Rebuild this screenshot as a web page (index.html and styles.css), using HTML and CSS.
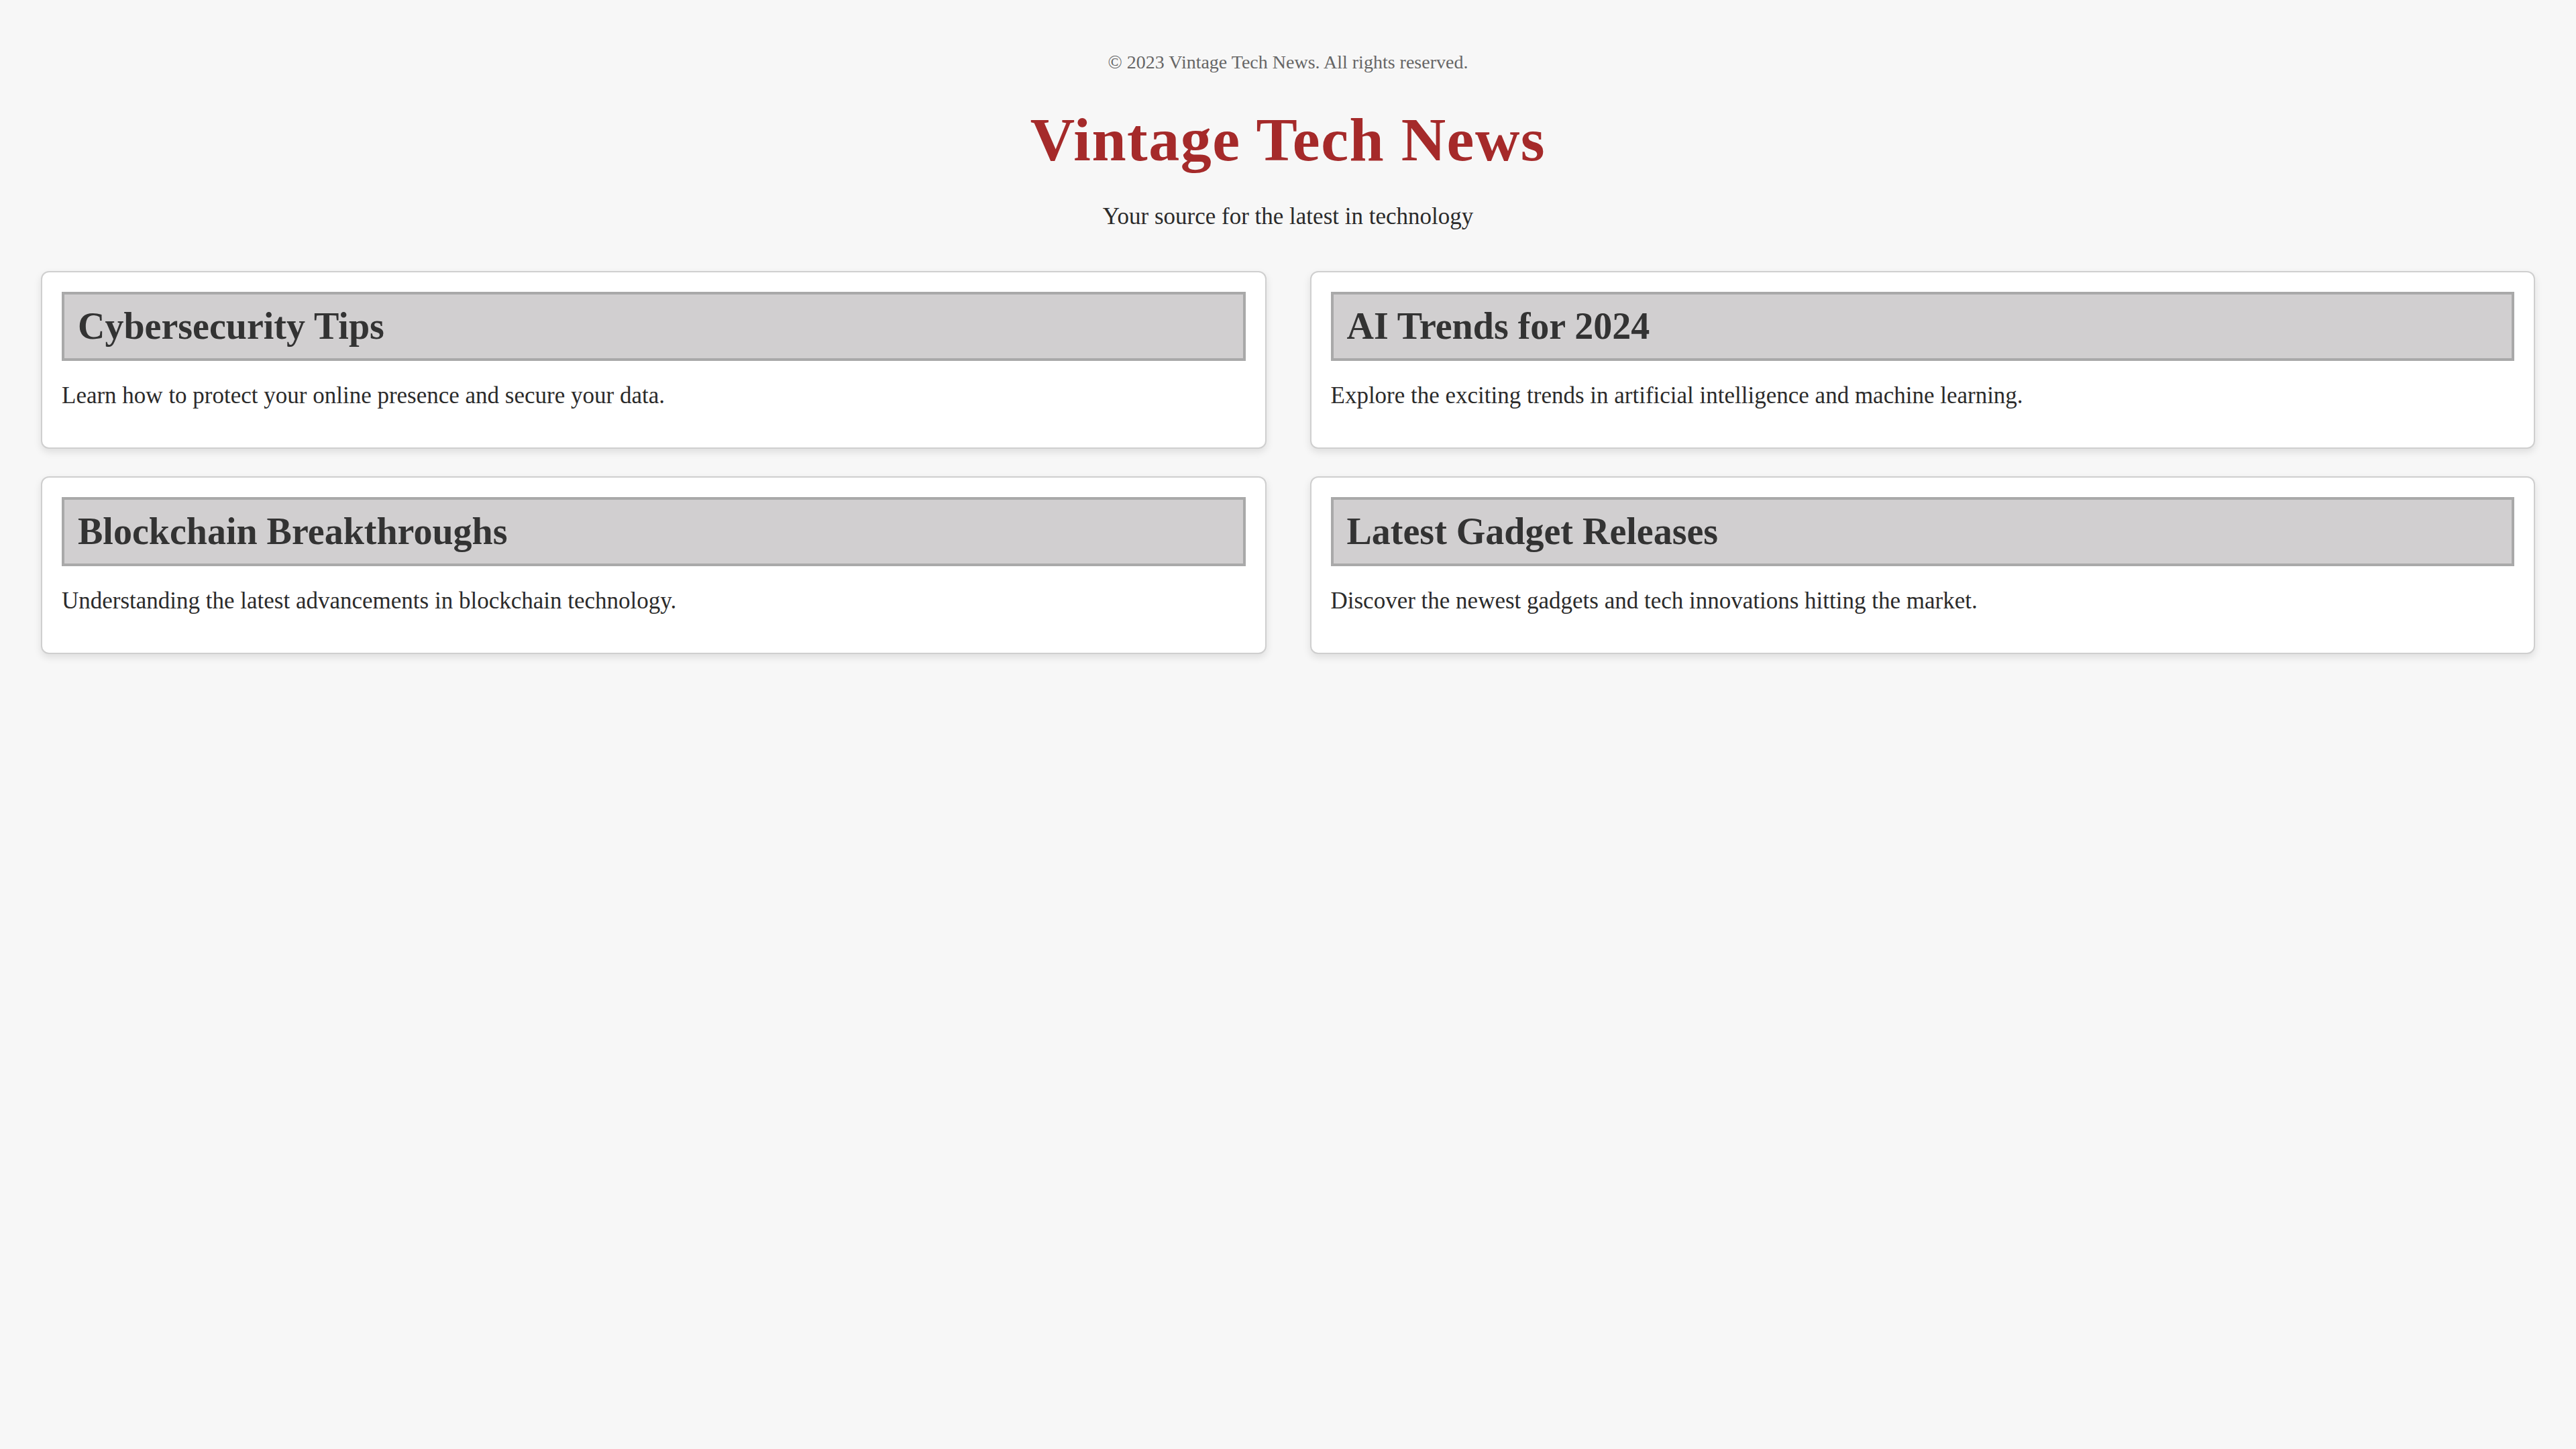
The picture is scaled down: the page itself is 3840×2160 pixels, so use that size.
FILE: index.html
```html
<!DOCTYPE html>
<html lang="en">
<head>
<meta charset="utf-8">
<title>Vintage Tech News</title>
<link rel="stylesheet" href="styles.css">
</head>
<body>
<header class="site-header">
  <p class="copyright">© 2023 Vintage Tech News. All rights reserved.</p>
  <h1 class="site-title">Vintage Tech News</h1>
  <p class="tagline">Your source for the latest in technology</p>
</header>
<main class="articles">
  <article class="card">
    <h2 class="card-title">Cybersecurity Tips</h2>
    <p class="card-text">Learn how to protect your online presence and secure your data.</p>
  </article>
  <article class="card">
    <h2 class="card-title">AI Trends for 2024</h2>
    <p class="card-text">Explore the exciting trends in artificial intelligence and machine learning.</p>
  </article>
  <article class="card">
    <h2 class="card-title">Blockchain Breakthroughs</h2>
    <p class="card-text">Understanding the latest advancements in blockchain technology.</p>
  </article>
  <article class="card">
    <h2 class="card-title">Latest Gadget Releases</h2>
    <p class="card-text">Discover the newest gadgets and tech innovations hitting the market.</p>
  </article>
</main>
</body>
</html>
```

FILE: styles.css
```css
html, body {
  margin: 0;
  padding: 0;
}
body {
  background: #f7f7f7;
  color: #333;
  font-family: "Liberation Serif", "Times New Roman", serif;
  padding: 76px 61px 61px;
}
.site-header {
  text-align: center;
}
.copyright {
  margin: 0;
  font-size: 28px;
  line-height: 34px;
  color: #666;
}
.site-title {
  margin: 53px 0 0;
  font-size: 92px;
  line-height: 90px;
  letter-spacing: 1.5px;
  color: #a52a2a;
  font-weight: bold;
}
.tagline {
  margin: 47px 0 0;
  font-size: 35px;
  line-height: 45px;
  color: #2b2b2b;
}
.articles {
  margin-top: 59px;
  display: grid;
  grid-template-columns: 1fr 1fr;
  column-gap: 65px;
  row-gap: 41px;
}
.card {
  background: #fff;
  border: 2px solid #cfcfcf;
  border-radius: 12px;
  padding: 29px;
  box-shadow: 0 5px 12px rgba(0, 0, 0, 0.1);
}
.card-title {
  margin: 0;
  background: #d1cfd0;
  border: 4px solid #a9a9a9;
  padding: 20px 20px;
  font-size: 56px;
  line-height: 55px;
  font-weight: bold;
  color: #333;
}
.card-text {
  margin: 29px 0 26px;
  font-size: 35px;
  line-height: 45px;
  color: #2b2b2b;
}
```
